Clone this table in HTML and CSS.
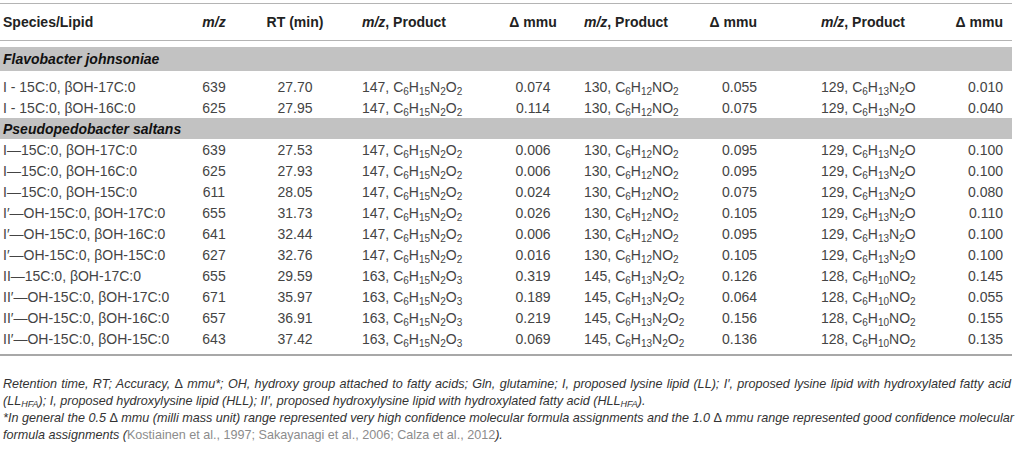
FILE: index.html
```html
<!DOCTYPE html>
<html lang="en">
<head>
<meta charset="utf-8">
<title>Lipid table</title>
<link rel="stylesheet" href="styles.css">
</head>
<body>
<div class="page">
<table class="tbl">
  <colgroup>
    <col class="c1"><col class="c2"><col class="c3"><col class="c4"><col class="c5"><col class="c6"><col class="c7"><col class="c8"><col class="c9">
  </colgroup>
  <thead>
    <tr>
      <th class="l">Species/Lipid</th>
      <th class="c"><i>m/z</i></th>
      <th class="c">RT (min)</th>
      <th class="p"><i>m/z</i>, Product</th>
      <th class="c">&Delta; mmu</th>
      <th class="p"><i>m/z</i>, Product</th>
      <th class="r">&Delta; mmu</th>
      <th class="p"><i>m/z</i>, Product</th>
      <th class="r">&Delta; mmu</th>
    </tr>
  </thead>
  <tbody class="first">
    <tr class="band"><td colspan="9">Flavobacter johnsoniae</td></tr>
    <tr class="top"><td class="l">I - 15C:0, &beta;OH-17C:0</td><td class="c">639</td><td class="c">27.70</td><td class="p">147, C<sub>6</sub>H<sub>15</sub>N<sub>2</sub>O<sub>2</sub></td><td class="c">0.074</td><td class="p">130, C<sub>6</sub>H<sub>12</sub>NO<sub>2</sub></td><td class="r">0.055</td><td class="p">129, C<sub>6</sub>H<sub>13</sub>N<sub>2</sub>O</td><td class="r">0.010</td></tr>
    <tr><td class="l">I - 15C:0, &beta;OH-16C:0</td><td class="c">625</td><td class="c">27.95</td><td class="p">147, C<sub>6</sub>H<sub>15</sub>N<sub>2</sub>O<sub>2</sub></td><td class="c">0.114</td><td class="p">130, C<sub>6</sub>H<sub>12</sub>NO<sub>2</sub></td><td class="r">0.075</td><td class="p">129, C<sub>6</sub>H<sub>13</sub>N<sub>2</sub>O</td><td class="r">0.040</td></tr>
  </tbody>
  <tbody class="last">
    <tr class="band"><td colspan="9">Pseudopedobacter saltans</td></tr>
    <tr><td class="l">I&mdash;15C:0, &beta;OH-17C:0</td><td class="c">639</td><td class="c">27.53</td><td class="p">147, C<sub>6</sub>H<sub>15</sub>N<sub>2</sub>O<sub>2</sub></td><td class="c">0.006</td><td class="p">130, C<sub>6</sub>H<sub>12</sub>NO<sub>2</sub></td><td class="r">0.095</td><td class="p">129, C<sub>6</sub>H<sub>13</sub>N<sub>2</sub>O</td><td class="r">0.100</td></tr>
    <tr><td class="l">I&mdash;15C:0, &beta;OH-16C:0</td><td class="c">625</td><td class="c">27.93</td><td class="p">147, C<sub>6</sub>H<sub>15</sub>N<sub>2</sub>O<sub>2</sub></td><td class="c">0.006</td><td class="p">130, C<sub>6</sub>H<sub>12</sub>NO<sub>2</sub></td><td class="r">0.095</td><td class="p">129, C<sub>6</sub>H<sub>13</sub>N<sub>2</sub>O</td><td class="r">0.100</td></tr>
    <tr><td class="l">I&mdash;15C:0, &beta;OH-15C:0</td><td class="c">611</td><td class="c">28.05</td><td class="p">147, C<sub>6</sub>H<sub>15</sub>N<sub>2</sub>O<sub>2</sub></td><td class="c">0.024</td><td class="p">130, C<sub>6</sub>H<sub>12</sub>NO<sub>2</sub></td><td class="r">0.075</td><td class="p">129, C<sub>6</sub>H<sub>13</sub>N<sub>2</sub>O</td><td class="r">0.080</td></tr>
    <tr><td class="l">I&prime;&mdash;OH-15C:0, &beta;OH-17C:0</td><td class="c">655</td><td class="c">31.73</td><td class="p">147, C<sub>6</sub>H<sub>15</sub>N<sub>2</sub>O<sub>2</sub></td><td class="c">0.026</td><td class="p">130, C<sub>6</sub>H<sub>12</sub>NO<sub>2</sub></td><td class="r">0.105</td><td class="p">129, C<sub>6</sub>H<sub>13</sub>N<sub>2</sub>O</td><td class="r">0.110</td></tr>
    <tr><td class="l">I&prime;&mdash;OH-15C:0, &beta;OH-16C:0</td><td class="c">641</td><td class="c">32.44</td><td class="p">147, C<sub>6</sub>H<sub>15</sub>N<sub>2</sub>O<sub>2</sub></td><td class="c">0.006</td><td class="p">130, C<sub>6</sub>H<sub>12</sub>NO<sub>2</sub></td><td class="r">0.095</td><td class="p">129, C<sub>6</sub>H<sub>13</sub>N<sub>2</sub>O</td><td class="r">0.100</td></tr>
    <tr><td class="l">I&prime;&mdash;OH-15C:0, &beta;OH-15C:0</td><td class="c">627</td><td class="c">32.76</td><td class="p">147, C<sub>6</sub>H<sub>15</sub>N<sub>2</sub>O<sub>2</sub></td><td class="c">0.016</td><td class="p">130, C<sub>6</sub>H<sub>12</sub>NO<sub>2</sub></td><td class="r">0.105</td><td class="p">129, C<sub>6</sub>H<sub>13</sub>N<sub>2</sub>O</td><td class="r">0.100</td></tr>
    <tr><td class="l">II&mdash;15C:0, &beta;OH-17C:0</td><td class="c">655</td><td class="c">29.59</td><td class="p">163, C<sub>6</sub>H<sub>15</sub>N<sub>2</sub>O<sub>3</sub></td><td class="c">0.319</td><td class="p">145, C<sub>6</sub>H<sub>13</sub>N<sub>2</sub>O<sub>2</sub></td><td class="r">0.126</td><td class="p">128, C<sub>6</sub>H<sub>10</sub>NO<sub>2</sub></td><td class="r">0.145</td></tr>
    <tr><td class="l">II&prime;&mdash;OH-15C:0, &beta;OH-17C:0</td><td class="c">671</td><td class="c">35.97</td><td class="p">163, C<sub>6</sub>H<sub>15</sub>N<sub>2</sub>O<sub>3</sub></td><td class="c">0.189</td><td class="p">145, C<sub>6</sub>H<sub>13</sub>N<sub>2</sub>O<sub>2</sub></td><td class="r">0.064</td><td class="p">128, C<sub>6</sub>H<sub>10</sub>NO<sub>2</sub></td><td class="r">0.055</td></tr>
    <tr><td class="l">II&prime;&mdash;OH-15C:0, &beta;OH-16C:0</td><td class="c">657</td><td class="c">36.91</td><td class="p">163, C<sub>6</sub>H<sub>15</sub>N<sub>2</sub>O<sub>3</sub></td><td class="c">0.219</td><td class="p">145, C<sub>6</sub>H<sub>13</sub>N<sub>2</sub>O<sub>2</sub></td><td class="r">0.156</td><td class="p">128, C<sub>6</sub>H<sub>10</sub>NO<sub>2</sub></td><td class="r">0.155</td></tr>
    <tr class="end"><td class="l">II&prime;&mdash;OH-15C:0, &beta;OH-15C:0</td><td class="c">643</td><td class="c">37.42</td><td class="p">163, C<sub>6</sub>H<sub>15</sub>N<sub>2</sub>O<sub>3</sub></td><td class="c">0.069</td><td class="p">145, C<sub>6</sub>H<sub>13</sub>N<sub>2</sub>O<sub>2</sub></td><td class="r">0.136</td><td class="p">128, C<sub>6</sub>H<sub>10</sub>NO<sub>2</sub></td><td class="r">0.135</td></tr>
  </tbody>
</table>
<div class="notes">
  <p class="note">
    <span class="ln">Retention time, RT; Accuracy, <span class="up">&Delta;</span> mmu*; OH, hydroxy group attached to fatty acids; Gln, glutamine; I, proposed lysine lipid (LL); I&prime;, proposed lysine lipid with hydroxylated fatty acid</span>
    <span class="ln last">(LL<sub>HFA</sub>); I, proposed hydroxylysine lipid (HLL); II&prime;, proposed hydroxylysine lipid with hydroxylated fatty acid (HLL<sub>HFA</sub>).</span>
  </p>
  <p class="note">
    <span class="ln">*In general the 0.5 <span class="up">&Delta;</span> mmu (milli mass unit) range represented very high confidence molecular formula assignments and the 1.0 <span class="up">&Delta;</span> mmu range represented good confidence molecular</span>
    <span class="ln last">formula assignments (<span class="cite">Kostiainen et al., 1997; Sakayanagi et al., 2006; Calza et al., 2012</span>).</span>
  </p>
</div>
</div>
</body>
</html>
```

FILE: styles.css
```css
html, body {
  margin: 0;
  padding: 0;
  background: #ffffff;
}

.page {
  width: 1012px;
  padding-top: 3px;
  font-family: "Liberation Sans", Arial, Helvetica, sans-serif;
}

.tbl {
  width: 1012px;
  table-layout: fixed;
  border-collapse: separate;
  border-spacing: 0;
  font-size: 14px;
  color: #444444;
}

.c1 { width: 190px; }
.c2 { width: 48px; }
.c3 { width: 114px; }
.c4 { width: 144px; }
.c5 { width: 74px; }
.c6 { width: 100px; }
.c7 { width: 141px; }
.c8 { width: 124px; }
.c9 { width: 77px; }

.tbl th {
  height: 36px;
  padding: 0;
  font-weight: bold;
  color: #222222;
  border-top: 1px solid #b4b4b4;
  border-bottom: 1px solid #b4b4b4;
  white-space: nowrap;
}

.tbl td {
  height: 21px;
  padding: 0;
  white-space: nowrap;
}

.tbl .l { text-align: left; padding-left: 3px; }
.tbl .c { text-align: center; }
.tbl .p { text-align: left; padding-left: 10px; }
.tbl .r { text-align: right; }

.tbl tr > :nth-child(6) { padding-left: 14px; }
.tbl tr > :nth-child(7) { padding-right: 54px; }
.tbl tr > :nth-child(9) { padding-right: 9px; }

.tbl .band td {
  background: #c2c2c2;
  color: #111111;
  font-weight: bold;
  font-style: italic;
  padding-left: 3px;
  height: 21px;
}

.tbl .first .band td {
  border-top: 6px solid #ffffff;
  height: 24px;
}

.tbl .top td {
  padding-top: 5px;
}

.tbl .end td {
  padding-bottom: 5px;
  border-bottom: 2px solid #a8a8a8;
}

.tbl sub {
  font-size: 10px;
  vertical-align: -3px;
  line-height: 0;
}

.notes {
  margin-top: 20px;
  padding-left: 3px;
  width: 1008px;
  font-size: 12.6px;
  font-style: italic;
  color: #333333;
  line-height: 17px;
}

.note {
  margin: 0;
}

.ln {
  display: block;
  text-align: justify;
  text-align-last: justify;
  white-space: nowrap;
}

.ln.last {
  text-align-last: left;
}

.up {
  font-style: normal;
}

.notes sub {
  font-size: 9px;
  vertical-align: -2px;
  line-height: 0;
}

.cite {
  font-style: normal;
  color: #8c8c8c;
}
```
